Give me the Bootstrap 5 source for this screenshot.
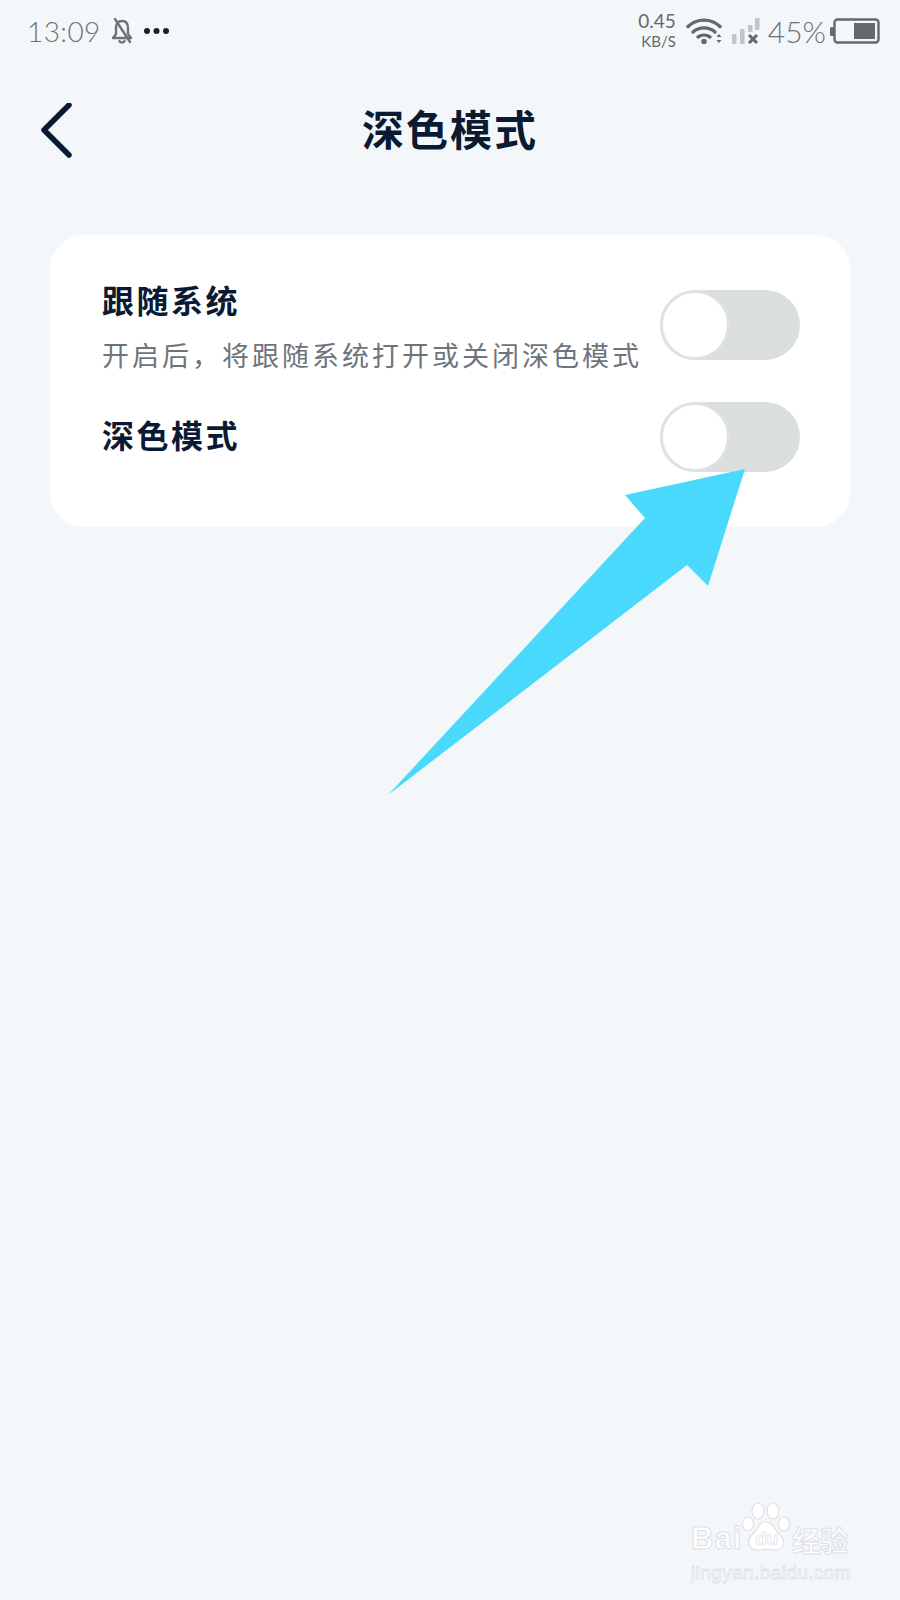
<!DOCTYPE html>
<html lang="zh-CN">
<head>
    <meta charset="UTF-8">
    <meta name="viewport" content="width=device-width, initial-scale=1.0">
    <title>深色模式</title>
    <link rel="stylesheet" href="https://cdn.jsdelivr.net/npm/bootstrap@5.3.0/dist/css/bootstrap.min.css">
    <style>
        body {
            background: #f3f7fa;
            width: 900px;
            height: 1600px;
            position: relative;
            overflow: hidden;
            font-family: "Liberation Serif", "Noto Sans CJK SC", serif;
            color: #0b1a33;
        }
        .status-bar {
            height: 62px;
            padding: 0 20px 0 27px;
            color: #6f7274;
            font-family: Lato, "Open Sans", sans-serif;
        }
        .status-time { font-size: 28px; font-weight: 300; letter-spacing: .4px; line-height: 1; }
        .status-pct { font-size: 30px; font-weight: 300; line-height: 1; }
        .status-speed { text-align: right; color: #66696b; margin: 0 2px 3px 0; }
        .speed-num { font-size: 19px; line-height: 23px; }
        .speed-unit { font-size: 15px; line-height: 18px; }
        .page-head {
            height: 140px;
            display: grid;
            grid-template-columns: 1fr auto 1fr;
            align-items: center;
        }
        .back-icon { margin-left: 41px; }
        .page-title { font-size: 42px; font-weight: 700; letter-spacing: 2px; line-height: 1; margin: 0; }
        .setting-panel {
            width: 800px;
            margin: 33px 0 0 50px;
            padding: 47px 50px 55px 52px;
            background: #fff;
            border-radius: 34px;
            gap: 25px;
        }
        .setting-name { font-size: 32px; font-weight: 700; letter-spacing: 2.5px; line-height: 40px; }
        .setting-desc { font-size: 27px; letter-spacing: 3px; line-height: 40px; margin-top: 15px; color: #6e747b; }
        .toggle-track {
            width: 140px;
            height: 70px;
            flex-shrink: 0;
            border-radius: 35px;
            background: #dbdedf;
        }
        .toggle-knob {
            display: block;
            width: 70px;
            height: 70px;
            background: #fff;
            border: 3px solid #dfe1e3;
            border-radius: 50%;
        }
        .toggle-first { margin-top: 8px; }
        .arrow-layer { position: absolute; left: 0; top: 0; pointer-events: none; }
        .wm-layer { position: absolute; left: 691px; top: 1500px; width: 170px; color: #fff; pointer-events: none; }
        .wm-bai { font-family: "Liberation Sans", sans-serif; font-size: 31px; font-weight: 700; line-height: 1; letter-spacing: 1px; -webkit-text-stroke: 1px #dde1e5; }
        .wm-paw { margin-left: -2px; }
        .wm-jy { font-family: "Noto Sans CJK SC", sans-serif; font-size: 28px; font-weight: 700; line-height: 1; margin-left: -4px; -webkit-text-stroke: 1px #dde1e5; }
        .wm-url { font-family: "Liberation Sans", sans-serif; font-size: 19px; line-height: 1; letter-spacing: .4px; margin-top: 9px; -webkit-text-stroke: .8px #dde1e5; }
        .wm-du { font-size: 19px; font-weight: 700; fill: #fff; stroke: #dde1e5; stroke-width: .7px; font-family: "Liberation Sans", sans-serif; }
    </style>
</head>
<body>
    <div class="status-bar d-flex justify-content-between align-items-center">
        <div class="d-flex align-items-center">
            <span class="status-time">13:09</span>
            <svg class="ms-2" width="26" height="28" viewBox="0 0 26 28" fill="none" stroke="#6f7274" stroke-width="2.400" stroke-linejoin="round" stroke-linecap="round">
                <path d="M13 4c-4 0-6 3-6 7v6l-3 4h18l-3-4v-6c0-4-2-7-6-7z"/>
                <path d="M10.500 24c.5 2 4.500 2 5 0"/>
                <path d="M6 2l15 23"/>
            </svg>
            <svg class="ms-2" width="27" height="8" viewBox="0 0 27 8" fill="#1b2026">
                <circle cx="4" cy="4" r="3"/><circle cx="13.500" cy="4" r="3"/><circle cx="23" cy="4" r="3"/>
            </svg>
        </div>
        <div class="d-flex align-items-center">
            <div class="status-speed">
                <div class="speed-num">0.45</div>
                <div class="speed-unit">KB/S</div>
            </div>
            <svg class="ms-2" width="38" height="27" viewBox="0 0 38 27" fill="none" stroke="#66696b" stroke-width="3.400" stroke-linecap="round">
                <path d="M2 8.500c9-8.500 23-8.500 32 0"/>
                <path d="M7 14c6-5.500 16-5.500 22 0"/>
                <path d="M12 19c3.500-2.500 8.500-2.500 12 0"/>
                <circle cx="18" cy="23.500" r="2.800" fill="#66696b" stroke="none"/>
                <path d="M33 16l2.500 3h-5zM33 25l2.500-3h-5z" fill="#66696b" stroke="none"/>
            </svg>
            <svg class="ms-2" width="28" height="26" viewBox="0 0 28 26">
                <rect x="0" y="16" width="4.500" height="10" rx="1" fill="#c2c5c7"/>
                <rect x="8" y="11" width="4.500" height="15" rx="1" fill="#c2c5c7"/>
                <rect x="16" y="7" width="4.500" height="7" rx="1" fill="#c2c5c7"/>
                <rect x="23" y="0" width="4.500" height="12" rx="1" fill="#c2c5c7"/>
                <path d="M17 17l8 8M25 17l-8 8" stroke="#66696b" stroke-width="3" fill="none"/>
            </svg>
            <span class="status-pct ms-2">45%</span>
            <svg class="ms-1" width="50" height="26" viewBox="0 0 50 26">
                <rect x="0" y="9" width="4" height="9" rx="1.500" fill="#66696b"/>
                <rect x="4.500" y="1.500" width="44" height="23" rx="3" fill="none" stroke="#66696b" stroke-width="2.400"/>
                <rect x="24" y="5" width="21" height="16" fill="#66696b"/>
            </svg>
        </div>
    </div>

    <div class="page-head">
        <svg class="back-icon" width="34" height="58" viewBox="0 0 34 58" fill="none" stroke="#0b1a33" stroke-width="5.500" stroke-linecap="round" stroke-linejoin="round">
            <path d="M28 2L3 27l25 25"/>
        </svg>
        <h1 class="page-title">深色模式</h1>
        <span></span>
    </div>

    <div class="setting-panel d-flex flex-column">
        <div class="d-flex justify-content-between align-items-start">
            <div>
                <div class="setting-name">跟随系统</div>
                <div class="setting-desc">开启后，将跟随系统打开或关闭深色模式</div>
            </div>
            <div class="toggle-track toggle-first" role="switch" aria-checked="false"><span class="toggle-knob"></span></div>
        </div>
        <div class="d-flex justify-content-between align-items-center">
            <div class="setting-name">深色模式</div>
            <div class="toggle-track" role="switch" aria-checked="false"><span class="toggle-knob"></span></div>
        </div>
    </div>

    <svg class="arrow-layer" width="900" height="1600" viewBox="0 0 900 1600">
        <polygon points="745,469 625,495 645,518 388,795 687,565 708,586" fill="#48d9fd"/>
    </svg>

    <div class="wm-layer">
        <div class="d-flex align-items-end">
            <span class="wm-bai">Bai</span>
            <svg class="wm-paw" width="56" height="54" viewBox="0 0 56 54" fill="#fff" stroke="#dde1e5" stroke-width="1.200">
                <ellipse cx="18" cy="11" rx="6" ry="8"/>
                <ellipse cx="33" cy="11" rx="6" ry="8"/>
                <ellipse cx="8" cy="24" rx="5.500" ry="7"/>
                <ellipse cx="44" cy="24" rx="5.500" ry="7"/>
                <path d="M26 22c-8 0-8 8-14 13-7 6-2 16 7 15 5 0 10-1.500 15 0 9 1 13-9 6-15-6-5-6-13-14-13z"/>
                <text class="wm-du" x="15" y="45">du</text>
            </svg>
            <span class="wm-jy">经验</span>
        </div>
        <div class="wm-url">jingyan.baidu.com</div>
    </div>

    <script src="https://cdn.jsdelivr.net/npm/bootstrap@5.3.0/dist/js/bootstrap.bundle.min.js"></script>
</body>
</html>
